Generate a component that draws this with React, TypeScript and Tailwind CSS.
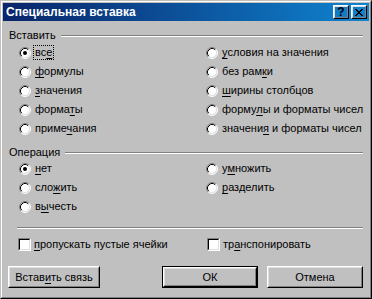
import type { ReactNode } from 'react';

/** Text with one access-key letter, marked by a leading "&". */
function Accel({ text }: { text: string }) {
  const i = text.indexOf('&');
  if (i < 0) return <>{text}</>;
  return (
    <>
      {text.slice(0, i)}
      <span className="underline underline-offset-[2px]">{text[i + 1]}</span>
      {text.slice(i + 2)}
    </>
  );
}

function Radio({ checked = false }: { checked?: boolean }) {
  return (
    <svg width="12" height="12" viewBox="0 0 12 12" className="shrink-0">
      <circle cx="6" cy="6" r="5" fill="#fff" />
      <path d="M2.11 9.89A5.5 5.5 0 0 1 9.89 2.11" fill="none" stroke="#808080" />
      <path d="M9.89 2.11A5.5 5.5 0 0 1 2.11 9.89" fill="none" stroke="#fff" />
      <path d="M2.82 9.18A4.5 4.5 0 0 1 9.18 2.82" fill="none" stroke="#000" />
      <path d="M9.18 2.82A4.5 4.5 0 0 1 2.82 9.18" fill="none" stroke="#dfdfdf" />
      {checked && <circle cx="6" cy="6" r="2" fill="#000" />}
    </svg>
  );
}

function RadioOption({ label, checked, focused }: { label: string; checked?: boolean; focused?: boolean }) {
  return (
    <div className="flex h-[19px] items-center gap-[2px]">
      <Radio checked={checked} />
      <span
        className={
          focused
            ? 'border border-dotted border-black px-px whitespace-nowrap'
            : 'border border-transparent px-px whitespace-nowrap'
        }
      >
        <Accel text={label} />
      </span>
    </div>
  );
}

function Checkbox({ label }: { label: string }) {
  return (
    <div className="flex h-[13px] items-center gap-[3px]">
      <span className="flex h-[13px] w-[13px] shrink-0 border border-t-[#808080] border-l-[#808080] border-r-white border-b-white">
        <span className="flex-1 border border-t-black border-l-black border-r-[#dfdfdf] border-b-[#dfdfdf] bg-white" />
      </span>
      <span className="whitespace-nowrap">
        <Accel text={label} />
      </span>
    </div>
  );
}

function Etched({ className = '' }: { className?: string }) {
  return <div className={`h-[2px] border-t border-b border-t-[#808080] border-b-white ${className}`} />;
}

function GroupHeader({ title }: { title: string }) {
  return (
    <div className="flex h-[13px] items-center pl-[6px] pr-[6px]">
      <span>{title}</span>
      <Etched className="ml-[5px] flex-1" />
    </div>
  );
}

function Raised({ children, className = '' }: { children: ReactNode; className?: string }) {
  return (
    <span className={`flex border border-t-white border-l-white border-r-black border-b-black ${className}`}>
      <span className="flex flex-1 items-center justify-center border border-t-[#dfdfdf] border-l-[#dfdfdf] border-r-[#808080] border-b-[#808080]">
        {children}
      </span>
    </span>
  );
}

function DialogButton({ label, isDefault }: { label: string; isDefault?: boolean }) {
  if (isDefault) {
    return (
      <span className="flex h-[22px] w-[96px] border border-black">
        <Raised className="flex-1">
          <Accel text={label} />
        </Raised>
      </span>
    );
  }
  return (
    <Raised className="h-[22px] w-[96px]">
      <Accel text={label} />
    </Raised>
  );
}

const CloseGlyph = () => (
  <svg width="8" height="7" viewBox="0 0 8 7" shapeRendering="crispEdges">
    <path
      d="M0 0h2v1H0zM6 0h2v1H6zM1 1h2v1H1zM5 1h2v1H5zM2 2h4v1H2zM3 3h2v1H3zM2 4h4v1H2zM1 5h2v1H1zM5 5h2v1H5zM0 6h2v1H0zM6 6h2v1H6z"
      fill="#000"
    />
  </svg>
);

const PASTE = [
  { label: 'вс&е', checked: true, focused: true },
  { label: '&условия на значения' },
  { label: '&формулы' },
  { label: 'без рам&ки' },
  { label: '&значения' },
  { label: '&ширины столбцов' },
  { label: 'форма&ты' },
  { label: 'форму&лы и форматы чисел' },
  { label: 'приме&чания' },
  { label: 'значени&я и форматы чисел' },
];

const OPERATION = [
  { label: '&нет', checked: true },
  { label: 'у&множить' },
  { label: 'сло&жить' },
  { label: '&разделить' },
  { label: 'в&ычесть' },
];

export default function App() {
  return (
    <div className="h-[299px] w-[372px] bg-[#c0c0c0] font-['Liberation_Sans','Arial',sans-serif] text-[11px] leading-[13px] text-black">
      <div className="flex h-full flex-col border border-t-[#c0c0c0] border-l-[#c0c0c0] border-r-black border-b-black">
        <div className="flex flex-1 flex-col border border-t-white border-l-white border-r-[#808080] border-b-[#808080] p-px">
          {/* Title bar */}
          <div className="flex h-[18px] items-center bg-linear-to-r from-[#0a246a] to-[#1084d0] pl-[3px] pr-[2px]">
            <span className="flex-1 text-[12px] font-bold text-white">Специальная вставка</span>
            <Raised className="h-[14px] w-[16px]">
              <span className="text-[12px] leading-[10px] font-bold">?</span>
            </Raised>
            <Raised className="ml-[2px] h-[14px] w-[16px]">
              <CloseGlyph />
            </Raised>
          </div>

          <div className="mt-[8px]">
            <GroupHeader title="Вставить" />
          </div>
          <div className="mt-px grid grid-cols-[187px_1fr] pl-[16px]">
            {PASTE.map((o) => (
              <RadioOption key={o.label} {...o} />
            ))}
          </div>

          <div className="mt-[8px]">
            <GroupHeader title="Операция" />
          </div>
          <div className="grid grid-cols-[187px_1fr] pl-[16px]">
            {OPERATION.map((o) => (
              <RadioOption key={o.label} {...o} />
            ))}
          </div>

          <Etched className="mt-[11px] ml-[14px] mr-[6px]" />

          <div className="mt-[9px] grid grid-cols-[189px_1fr] pl-[15px]">
            <Checkbox label="&пропускать пустые ячейки" />
            <Checkbox label="тр&анспонировать" />
          </div>

          <div className="mt-[15px] flex pl-[5px] pr-[6px]">
            <Raised className="h-[22px] w-[92px]">
              <Accel text="Встав&ить связь" />
            </Raised>
            <div className="ml-auto flex gap-[9px]">
              <DialogButton label="ОК" isDefault />
              <DialogButton label="Отмена" />
            </div>
          </div>
        </div>
      </div>
    </div>
  );
}
